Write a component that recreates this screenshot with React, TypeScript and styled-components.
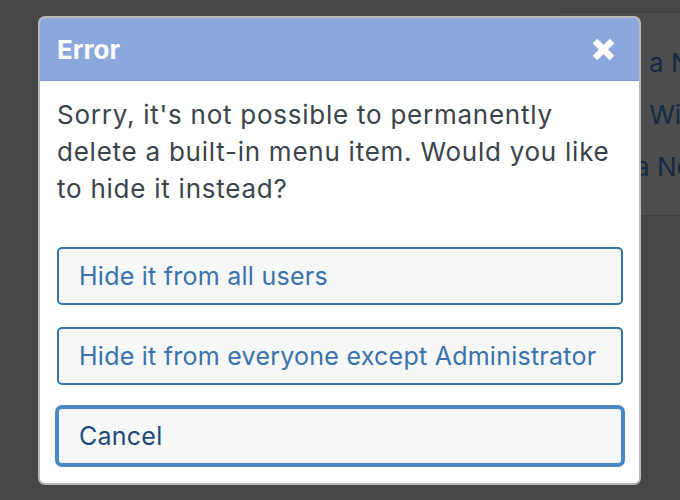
import React from "react";
import styled, { createGlobalStyle, css } from "styled-components";

const GlobalStyle = createGlobalStyle`
  html, body { margin: 0; padding: 0; }
  body {
    background: #464646;
    font-family: Inter, "Noto Sans", "Liberation Sans", sans-serif;
    -webkit-font-smoothing: antialiased;
  }
`;

const Page = styled.div`
  position: relative;
  width: 680px;
  height: 500px;
  overflow: hidden;
  background: #464646;
  display: flex;
  justify-content: flex-end;
  align-items: flex-start;
  padding-top: 12px;
  box-sizing: border-box;
`;

const SidePanel = styled.div`
  width: 123px;
  height: 204px;
  box-sizing: border-box;
  background: #4d4d4d;
  border-top: 1px solid #3d3d3d;
  border-left: 1px solid #3d3d3d;
  border-bottom: 1px solid #3d3d3d;
  display: flex;
  flex-direction: column;
  padding-top: 34px;
  gap: 20px;
  overflow: hidden;
`;

const PanelLink = styled.div<{ $indent: number }>`
  white-space: nowrap;
  color: #152a44;
  font-size: 26px;
  line-height: 32px;
  padding-left: ${(p) => p.$indent}px;
`;

const Dialog = styled.div`
  position: absolute;
  left: 38px;
  top: 16px;
  width: 603px;
  box-sizing: border-box;
  background: #fff;
  border: 2px solid #b9b9b9;
  border-radius: 7px;
  overflow: hidden;
  display: flex;
  flex-direction: column;
`;

const Header = styled.div`
  height: 63px;
  box-sizing: border-box;
  background: #8ba8dd;
  border-bottom: 1px solid #7f9dd3;
  display: flex;
  align-items: center;
  justify-content: space-between;
  padding: 0 23px 0 17px;
`;

const Title = styled.h1`
  margin: 0;
  color: #fff;
  font-size: 26px;
  font-weight: 700;
`;

const CloseButton = styled.button`
  border: 0;
  background: transparent;
  padding: 0;
  width: 25px;
  height: 25px;
  display: flex;
  align-items: center;
  justify-content: center;
  cursor: pointer;
`;

const Body = styled.div`
  padding: 15px 16px 18px 17px;
  display: flex;
  flex-direction: column;
`;

const Message = styled.p`
  margin: 0 0 40px;
  max-width: 564px;
  color: #3c434a;
  font-size: 26px;
  letter-spacing: 0.75px;
  line-height: 37px;
`;

const Actions = styled.div`
  display: flex;
  flex-direction: column;
  gap: 22px;
`;

const ActionButton = styled.button<{ $focused?: boolean }>`
  height: 58px;
  box-sizing: border-box;
  text-align: left;
  padding: 0 20px;
  background: #f6f7f7;
  border: 2px solid #3a72ad;
  border-radius: 5px;
  color: #3a72ad;
  font-family: inherit;
  font-size: 25px;
  letter-spacing: 0.25px;
  cursor: pointer;
  ${(p) =>
    p.$focused &&
    css`
      border-color: #4a85c4;
      box-shadow: 0 0 0 2px #4a85c4;
      color: #1d4a7a;
    `}
`;

export default function App() {
  return (
    <>
      <GlobalStyle />
      <Page>
        <SidePanel>
          <PanelLink $indent={2}>Create a New</PanelLink>
          <PanelLink $indent={16}>Move Widget</PanelLink>
          <PanelLink $indent={20}>Add a New</PanelLink>
        </SidePanel>
        <Dialog role="dialog">
          <Header>
            <Title>Error</Title>
            <CloseButton aria-label="Close">
              <svg width="25" height="25" viewBox="0 0 25 25">
                <path
                  d="M4 4 L21 21 M21 4 L4 21"
                  stroke="#fff"
                  strokeWidth="6.5"
                  strokeLinecap="butt"
                />
              </svg>
            </CloseButton>
          </Header>
          <Body>
            <Message>
              Sorry, it's not possible to permanently delete a built-in menu item. Would you like to hide it
              instead?
            </Message>
            <Actions>
              <ActionButton>Hide it from all users</ActionButton>
              <ActionButton>Hide it from everyone except Administrator</ActionButton>
              <ActionButton $focused>Cancel</ActionButton>
            </Actions>
          </Body>
        </Dialog>
      </Page>
    </>
  );
}
